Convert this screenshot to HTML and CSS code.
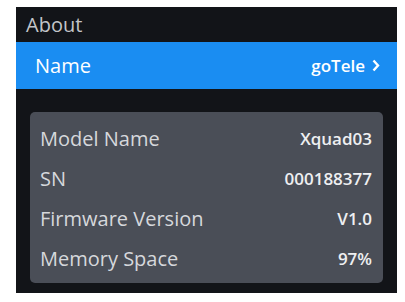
FILE: index.html
```html
<!DOCTYPE html>
<html lang="en">

<head>
    <meta charset="UTF-8">
    <meta name="viewport" content="width=device-width, initial-scale=1.0">
    <title>About</title>
    <link rel="stylesheet" href="styles.css">
</head>

<body>
    <div class="panel">
        <header class="title">About</header>
        <div class="namerow">
            <span>Name</span>
            <span class="namevalue">goTele
                <svg width="8" height="13" viewBox="0 0 8 13">
                    <polyline points="1.5,1.5 6,6.5 1.5,11.5" fill="none" stroke="#ffffff" stroke-width="2.4" />
                </svg>
            </span>
        </div>
        <div class="info">
            <div class="row">
                <span class="label">Model Name</span>
                <span class="value">Xquad03</span>
            </div>
            <div class="row">
                <span class="label">SN</span>
                <span class="value">000188377</span>
            </div>
            <div class="row">
                <span class="label">Firmware Version</span>
                <span class="value">V1.0</span>
            </div>
            <div class="row">
                <span class="label">Memory Space</span>
                <span class="value">97%</span>
            </div>
        </div>
    </div>
</body>

</html>
```

FILE: styles.css
```css
* {
    margin: 0;
    padding: 0;
    box-sizing: border-box;
}

body {
    background-color: #ffffff;
    font-family: "Open Sans", "Noto Sans", sans-serif;
}

.panel {
    margin: 7px 8px 0 16px;
    width: 381px;
    height: 286px;
    background-color: #121418;
    display: flex;
    flex-direction: column;
}

.title {
    height: 35px;
    padding-left: 10px;
    display: flex;
    align-items: center;
    font-size: 20px;
    color: #c3c5c9;
}

.namerow {
    height: 47px;
    padding: 0 17px 0 19px;
    display: flex;
    align-items: center;
    justify-content: space-between;
    background-color: #1a8df2;
    color: #ffffff;
    font-size: 20px;
}

.namevalue {
    display: flex;
    align-items: center;
    gap: 7px;
    font-size: 17px;
    font-weight: 600;
}

.info {
    margin: 23px 14px 0 14px;
    padding: 6px 11px 5px 10px;
    background-color: #4a4e57;
    border-radius: 5px;
}

.row {
    height: 40px;
    display: flex;
    align-items: center;
    justify-content: space-between;
}

.label {
    font-size: 20px;
    color: #d6d8dc;
}

.value {
    font-size: 17px;
    font-weight: 600;
    color: #eeeff1;
}
```
